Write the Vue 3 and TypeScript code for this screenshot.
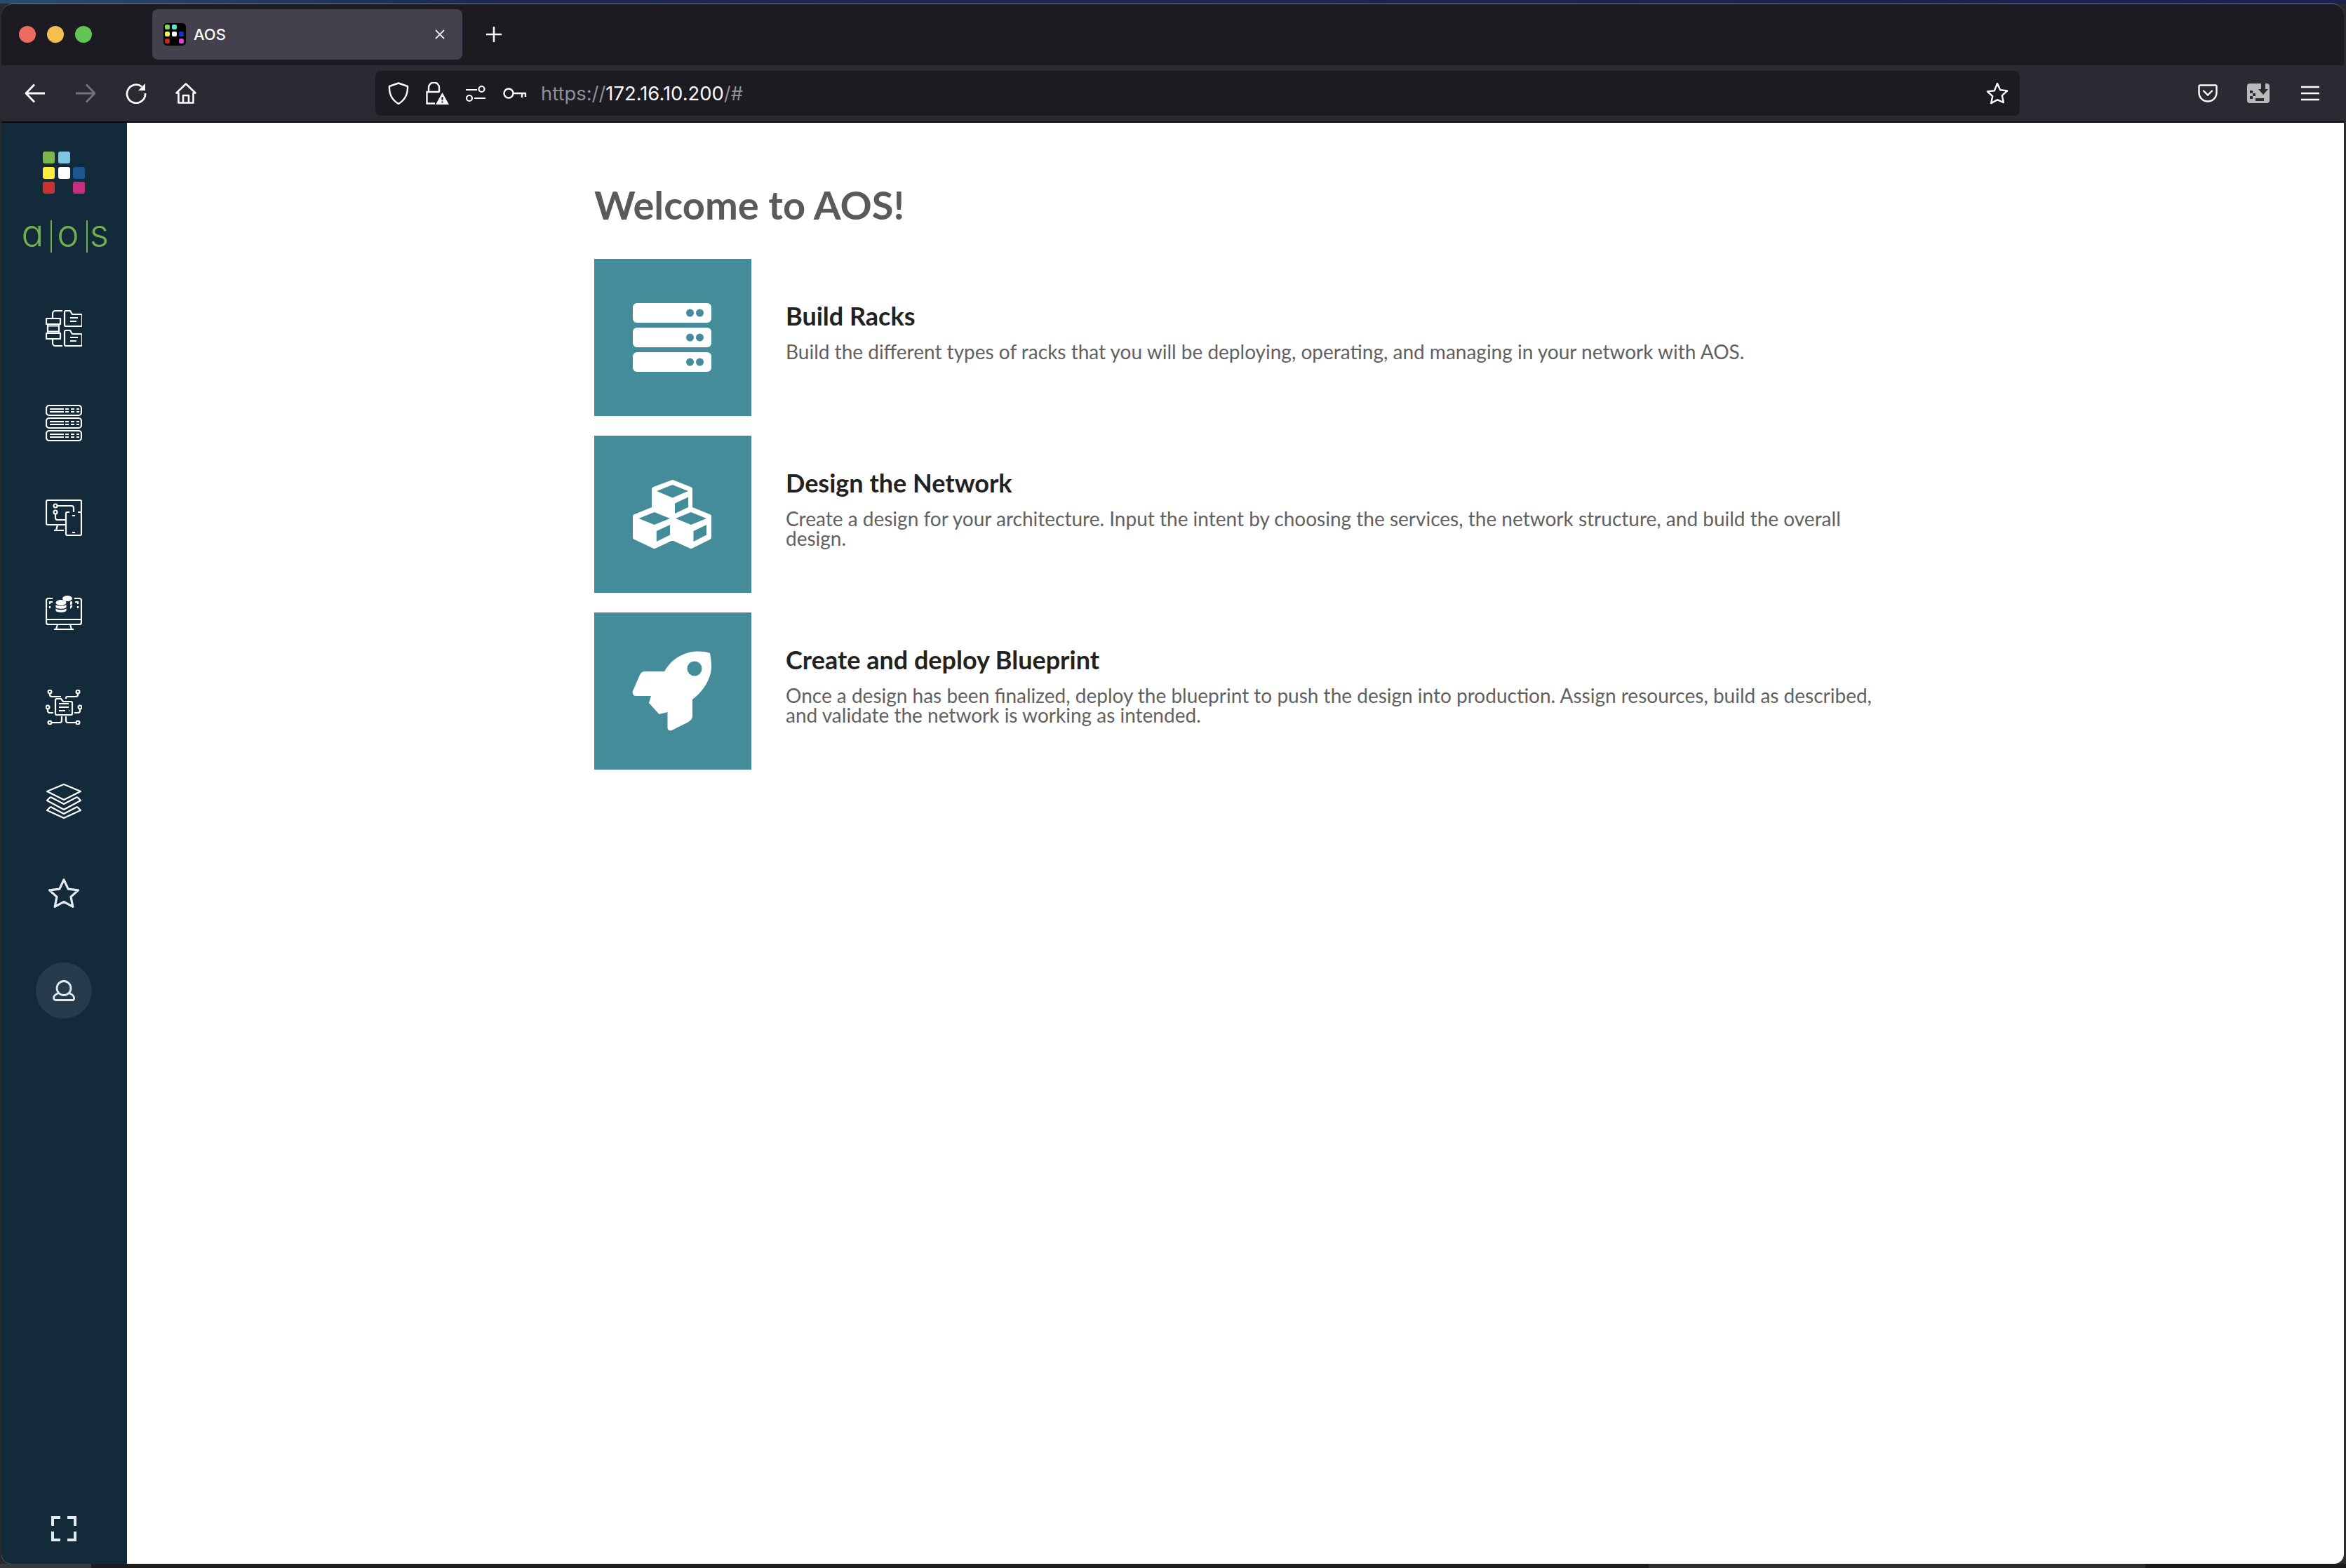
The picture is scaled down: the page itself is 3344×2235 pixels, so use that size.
<script setup lang="ts">
interface Card {
  kind: string
  title: string
  text: string
}

const cards: Card[] = [
  {
    kind: "racks",
    title: "Build Racks",
    text: "Build the different types of racks that you will be deploying, operating, and managing in your network with AOS.",
  },
  {
    kind: "design",
    title: "Design the Network",
    text: "Create a design for your architecture. Input the intent by choosing the services, the network structure, and build the overall design.",
  },
  {
    kind: "deploy",
    title: "Create and deploy Blueprint",
    text: "Once a design has been finalized, deploy the blueprint to push the design into production. Assign resources, build as described, and validate the network is working as intended.",
  },
]

const logoDots = ["green", "sky", "none", "yellow", "white", "blue", "red", "none", "pink"]
const rackRows = [63, 98, 133]
</script>

<template>
  <div class="screen">
    <div class="desktop-top"></div>
    <div class="window">
      <div class="titlebar">
        <div class="lights">
          <span class="light red"></span>
          <span class="light amber"></span>
          <span class="light green"></span>
        </div>
        <div class="tab">
          <span class="favicon">
            <i class="fd c1"></i><i class="fd c2"></i><i class="fd"></i>
            <i class="fd c3"></i><i class="fd c4"></i><i class="fd c5"></i>
            <i class="fd c6"></i><i class="fd"></i><i class="fd c7"></i>
          </span>
          <span class="tab-title">AOS</span>
          <svg class="tab-close" width="14" height="14" viewBox="0 0 14 14">
            <path d="M1 1l12 12M13 1L1 13" stroke="#e8e8ea" stroke-width="1.8" fill="none" />
          </svg>
        </div>
        <svg class="new-tab" width="24" height="24" viewBox="0 0 24 24">
          <path d="M12 1v22M1 12h22" stroke="#fbfbfe" stroke-width="2.6" fill="none" />
        </svg>
      </div>

      <div class="toolbar">
        <svg class="tb-icon back" width="30" height="28" viewBox="0 0 30 28" fill="none" stroke="#fbfbfe" stroke-width="2.8">
          <path d="M29 14H3M14 1.5L2 14l12 12.5" stroke-linejoin="round" />
        </svg>
        <svg class="tb-icon forward" width="30" height="28" viewBox="0 0 30 28" fill="none" stroke="#74737a" stroke-width="2.8">
          <path d="M1 14h26M16 1.5L28 14 16 26.5" stroke-linejoin="round" />
        </svg>
        <svg class="tb-icon reload" width="30" height="30" viewBox="0 0 30 30" fill="none" stroke="#fbfbfe" stroke-width="2.8">
          <path d="M23 5.5A13 13 0 1 0 28 15" />
          <path d="M28 1v10H18z" fill="#fbfbfe" stroke="none" />
        </svg>
        <svg class="tb-icon home" width="30" height="30" viewBox="0 0 30 30" fill="none" stroke="#fbfbfe" stroke-width="2.6" stroke-linejoin="round">
          <path d="M1.5 14.5L15 1.5l13.5 13H25.5v14h-21v-14z" />
          <path d="M11 28.5V18h8v10.5" />
        </svg>

        <div class="urlbar">
          <svg class="ub-icon shield" width="30" height="32" viewBox="0 0 30 32" fill="none" stroke="#fbfbfe" stroke-width="2.4" stroke-linejoin="round">
            <path d="M15 1.5L28 6c.5 11-3 19-13 25C5 25 1.5 17 2 6z" />
          </svg>
          <svg class="ub-icon lock" width="34" height="32" viewBox="0 0 34 32" fill="none">
            <path d="M5 14V8a7.5 7.5 0 0 1 15 0v6M14 30.5H2.5V14h18" stroke="#fbfbfe" stroke-width="2.4" />
            <path d="M24.5 15L34 32H15z" fill="#fbfbfe" />
            <path d="M24.5 21v5M24.5 27.5v2" stroke="#2b2a33" stroke-width="2.2" />
          </svg>
          <svg class="ub-icon perms" width="30" height="30" viewBox="0 0 30 30" fill="none" stroke="#fbfbfe" stroke-width="2.2">
            <path d="M1 10h16M13 22h16" />
            <circle cx="23.5" cy="9" r="4" />
            <circle cx="6" cy="22" r="4" />
          </svg>
          <svg class="ub-icon key" width="34" height="20" viewBox="0 0 34 20" fill="none" stroke="#fbfbfe" stroke-width="2.4">
            <circle cx="8" cy="10" r="6.5" />
            <path d="M14.5 10H33M27 10v6M32 10v5" />
          </svg>
          <span class="url"><span class="dim">https://</span>172.16.10.200<span class="dim">/#</span></span>
          <svg class="ub-star" width="32" height="32" viewBox="0 0 32 32" fill="none" stroke="#fbfbfe" stroke-width="2.4" stroke-linejoin="round">
            <path d="M16 2l4.200 9.200 10 1.200-7.400 6.800 2 9.900L16 25.200l-8.800 4.900 2-9.900-7.400-6.800 10-1.200z" />
          </svg>
        </div>

        <svg class="tb-icon pocket" width="28" height="26" viewBox="0 0 28 26" fill="none" stroke="#fbfbfe" stroke-width="2.4">
          <path d="M3 1.5h22A1.500 1.500 0 0 1 26.500 3v9c0 7-5.500 12.500-12.500 12.500S1.500 19 1.500 12V3A1.500 1.500 0 0 1 3 1.500z" />
          <path d="M8 9.5l6 6 6-6" stroke-linecap="round" />
        </svg>
        <svg class="tb-icon ext" width="32" height="28" viewBox="0 0 32 28">
          <rect width="32" height="28" rx="4" fill="#b9b9b9" />
          <path d="M20 0h6v8h4l-7 8-7-8h4z" fill="#2b2a33" />
          <path d="M4 10h4v4H4zM8 14h4v4H8zM4 18h4v4H4zM12 21h12v4H12z" fill="#2b2a33" />
        </svg>
        <svg class="tb-icon menu" width="26" height="22" viewBox="0 0 26 22">
          <path d="M0 2h26M0 11h26M0 20h26" stroke="#fbfbfe" stroke-width="2.6" />
        </svg>
      </div>

      <div class="page">
        <aside class="sidebar">
          <div class="logo-dots">
            <span v-for="(c, i) in logoDots" :key="i" class="ld" :class="c"></span>
          </div>
          <div class="wordmark">
            <span class="wm a">a</span><span class="wm-sep first"></span>
            <span class="wm o">o</span><span class="wm-sep"></span>
            <span class="wm s">s</span>
          </div>

          <nav class="nav">
            <div class="nav-item">
              <svg width="52" height="52" viewBox="0 0 52 52" fill="none" stroke="#fff" stroke-width="2.2" stroke-linejoin="round">
                <path d="M1 12h20v8H1zM3 20v13M19 20v13M3 22.5h16M3 30.5h16M1 33h20v8H1z" />
                <path d="M10 11V5a4 4 0 0 1 4-4h10M10 42v5a4 4 0 0 0 4 4h10" />
                <path d="M27 3a2 2 0 0 1 2-2h6l3 5h12a2 2 0 0 1 2 2v13a2 2 0 0 1-2 2H29a2 2 0 0 1-2-2z" />
                <path d="M35 11h11M35 16h9" />
                <path d="M27 31a2 2 0 0 1 2-2h6l3 5h12a2 2 0 0 1 2 2v13a2 2 0 0 1-2 2H29a2 2 0 0 1-2-2z" />
                <path d="M35 39h11M35 44h9" />
              </svg>
            </div>
            <div class="nav-item">
              <svg width="52" height="52" viewBox="0 0 52 52" fill="none" stroke="#fff" stroke-width="2.2">
                <rect x="1" y="1" width="50" height="14" rx="4" />
                <rect x="1" y="19" width="50" height="14" rx="4" />
                <rect x="1" y="37" width="50" height="14" rx="4" />
                <path d="M6 6h20M6 10h20M28 6h5M36 6h5M44 6h4M28 10h5M36 10h5M44 10h4" />
                <path d="M6 24h20M6 28h20M28 24h5M36 24h5M44 24h4M28 28h5M36 28h5M44 28h4" />
                <path d="M6 42h20M6 46h20M28 42h5M36 42h5M44 42h4M28 46h5M36 46h5M44 46h4" />
              </svg>
            </div>
            <div class="nav-item">
              <svg width="52" height="52" viewBox="0 0 52 52" fill="none" stroke="#fff" stroke-width="2.2" stroke-linejoin="round">
                <path d="M28 36H3a2 2 0 0 1-2-2V3a2 2 0 0 1 2-2h46a2 2 0 0 1 2 2v15" />
                <path d="M17 36l-2 8M12 44h14" />
                <path d="M34 18h-3a2 2 0 0 0-2 2v29a2 2 0 0 0 2 2h18a2 2 0 0 0 2-2V20a2 2 0 0 0-2-2h-3" />
                <path d="M38 23h4M38 47h4" />
                <circle cx="14" cy="9" r="2.5" />
                <circle cx="14" cy="18" r="2.5" />
                <path d="M17 9h20a3 3 0 0 1 3 3v6M14 21v5a3 3 0 0 0 3 3h11" />
              </svg>
            </div>
            <div class="nav-item">
              <svg width="52" height="50" viewBox="0 0 52 50" fill="none" stroke="#fff" stroke-width="2.2" stroke-linejoin="round">
                <path d="M10 5H4a3 3 0 0 0-3 3v31a3 3 0 0 0 3 3h44a3 3 0 0 0 3-3V8a3 3 0 0 0-3-3h-7" />
                <path d="M1 35h50M17 42l-2 7M35 42l2 7M12 49h28" />
                <path d="M10 10H6v3M6 16v3M42 10h4v3M46 16v3" />
                <g fill="#fff" stroke="none">
                  <ellipse cx="31" cy="5" rx="7" ry="4" />
                  <path d="M35 9.5l3-.5v4l-3 2zM35 16l3-2v3l-3 3z" />
                  <ellipse cx="22" cy="11" rx="7.5" ry="4" />
                  <path d="M14.5 13.5c1 3 14 3 15 0v4c-1 3-14 3-15 0zM14.5 19c1 3 14 3 15 0v3.5c-1 3-14 3-15 0z" />
                </g>
              </svg>
            </div>
            <div class="nav-item">
              <svg width="52" height="50" viewBox="0 0 52 50" fill="none" stroke="#fff" stroke-width="2.2" stroke-linejoin="round">
                <path d="M14 15a2 2 0 0 1 2-2h6l3 4h11a2 2 0 0 1 2 2v15a2 2 0 0 1-2 2H16a2 2 0 0 1-2-2z" />
                <path d="M19 20h14M19 25h14M19 30h9M33 30h1" />
                <circle cx="6" cy="3" r="2.4" />
                <circle cx="46" cy="3" r="2.4" />
                <circle cx="3" cy="25" r="2.4" />
                <circle cx="49" cy="25" r="2.4" />
                <circle cx="6" cy="47" r="2.4" />
                <circle cx="46" cy="47" r="2.4" />
                <path d="M6 5.500V7a3 3 0 0 0 3 3h13M46 5.500V7a3 3 0 0 1-3 3H31a2 2 0 0 0-2 2v1" />
                <path d="M3 27.500V30a3 3 0 0 0 3 3h5M49 27.500V30a3 3 0 0 1-3 3h-5" />
                <path d="M8.500 47H20a3 3 0 0 0 3-3v-6M43.500 47H32a3 3 0 0 1-3-3v-6" />
              </svg>
            </div>
            <div class="nav-item">
              <svg width="50" height="50" viewBox="0 0 50 50" fill="none" stroke="#fff" stroke-width="2.2" stroke-linejoin="round">
                <path d="M25 1L49 11 25 23 1 11z" />
                <path d="M6 19l-5 5 24 13 24-13-5-5M6 19l19 10 19-10" />
                <path d="M6 33l-5 5 24 11 24-11-5-5M6 33l19 10 19-10" />
              </svg>
            </div>
            <div class="nav-item">
              <svg class="nav-star" width="46" height="42" viewBox="0 0 46 42" fill="none" stroke="#e4e9ee" stroke-width="3.2" stroke-linejoin="round">
                <path d="M23 2l6.200 13.100 14.300 1.700-10.500 9.600 2.800 14-12.800-7-12.800 7 2.800-14L2.500 16.800l14.300-1.700z" />
              </svg>
            </div>
            <div class="nav-item">
              <span class="avatar">
                <svg width="32" height="30" viewBox="0 0 32 30" fill="none" stroke="#e4e9ee" stroke-width="2.8" stroke-linejoin="round">
                  <circle cx="16" cy="11.5" r="10" />
                  <path d="M9 18.500C4.500 20 1.500 22.500 1.500 25.500a3 3 0 0 0 3 3h25a3 3 0 0 0 1-3c0-3-3-5.500-7.500-7" />
                </svg>
              </span>
            </div>
          </nav>

          <svg class="fullscreen" width="36" height="36" viewBox="0 0 36 36" fill="none" stroke="#e4e9ee" stroke-width="4">
            <path d="M13 2H2v12M23 2h11v12M13 34H2V22M23 34h11V22" />
          </svg>
        </aside>

        <main class="content">
          <h1 class="welcome">Welcome to AOS!</h1>
          <div class="cards">
            <section v-for="card in cards" :key="card.kind" class="card">
              <div class="tile">
                <svg width="224" height="224" viewBox="0 0 224 224">
                  <g v-if="card.kind === 'racks'">
                    <g v-for="y in rackRows" :key="y">
                      <rect x="55" :y="y" width="112" height="28" rx="6" fill="#fff" />
                      <circle cx="136.5" :cy="y + 14" r="5.5" fill="#458c9b" />
                      <circle cx="150.5" :cy="y + 14" r="5.5" fill="#458c9b" />
                    </g>
                  </g>
                  <g v-else-if="card.kind === 'design'">
                    <path d="M111.6 66L137 76v28l27 11v30l-26 13-26.400-12-25.900 12L58 145v-30l27-11V76z" fill="#fff" stroke="#fff" stroke-width="6" stroke-linejoin="round" />
                    <path d="M111.6 70L134 79l-22.400 9.500L89 79zM134 87.500V102l-19 9V96.500zM85.700 109l22.300 9-22.300 9-22.300-9zM108 127v14.500L88.800 151v-15zM138 109l22 9-22 9-22-9zM160 127v14.500L141.500 151v-15z" fill="#458c9b" />
                  </g>
                  <g v-else>
                    <path d="M165 58c-9-3-20-3-30-1-15 4-27 13-35 27H72c-3 0-6 2-7 5l-10 23c-1 4 1 7 5 7h21l-3 10 14.500 16 12-3v22c0 4 3 5 6 4l22-11c5-3 7-5 7.500-8v-25c16-12 27-30 27-47 0-7-1-13-2-19z" fill="#fff" />
                    <circle cx="143" cy="80" r="10.5" fill="#458c9b" />
                  </g>
                </svg>
              </div>
              <div class="card-body">
                <h2>{{ card.title }}</h2>
                <p>{{ card.text }}</p>
              </div>
            </section>
          </div>
        </main>
      </div>
    </div>
    <div class="desktop-bottom">
      <span class="dock-left"></span>
      <span class="dock-dark"></span>
      <span class="dock-mid"></span>
      <span class="dock-end"></span>
    </div>
  </div>
</template>

<style>
html,
body {
  margin: 0;
  background: #1d1c1e;
}
</style>

<style scoped>
.screen {
  width: 3344px;
  height: 2235px;
  display: flex;
  flex-direction: column;
  overflow: hidden;
  background: #2a2a2c;
  font-family: "Lato", "Open Sans", sans-serif;
}

.desktop-top {
  height: 5px;
  flex: none;
  background: linear-gradient(90deg, #2b4a6e 0, #1d2a4f 20%, #1b2050 100%);
}

.window {
  flex: 1;
  min-height: 0;
  margin: 0 3px 0 2px;
  display: flex;
  flex-direction: column;
  border-radius: 16px 16px 14px 14px;
  overflow: hidden;
}

.titlebar {
  height: 88px;
  flex: none;
  box-sizing: border-box;
  border-top: 1px solid #77767c;
  border-radius: 16px 16px 0 0;
  background: #1c1b22;
  display: flex;
  align-items: flex-start;
  padding-top: 7px;
}

.lights {
  display: flex;
  gap: 16px;
  margin: 24px 0 0 25px;
}

.light {
  width: 24px;
  height: 24px;
  border-radius: 50%;
}

.light.red {
  background: #ed6a5e;
}

.light.amber {
  background: #f5bf4f;
}

.light.green {
  background: #61c454;
}

.tab {
  width: 442px;
  height: 72px;
  margin-left: 86px;
  box-sizing: border-box;
  border-radius: 8px;
  background: #42414d;
  display: flex;
  align-items: center;
  padding: 0 25px 0 16px;
}

.favicon {
  width: 32px;
  height: 32px;
  border-radius: 5px;
  background: #000;
  display: grid;
  grid-template-columns: repeat(3, 7px);
  grid-auto-rows: 7px;
  gap: 3px;
  padding: 2px 0 0 2px;
  box-sizing: border-box;
}

.fd {
  display: block;
  border-radius: 2px;
}

.c1 { background: #6fe04a; }
.c2 { background: #4fe6e6; }
.c3 { background: #f7f73d; }
.c4 { background: #fff; }
.c5 { background: #1030e8; }
.c6 { background: #e81818; }
.c7 { background: #e040e0; }

.tab-title {
  margin-left: 11px;
  flex: 1;
  color: #fbfbfe;
  font: 500 22px "Inter", sans-serif;
}

.new-tab {
  margin: 24px 0 0 33px;
}

.toolbar {
  height: 80px;
  flex: none;
  background: #2b2a33;
  border-bottom: 2px solid #0c0c0d;
  display: flex;
  align-items: center;
  box-sizing: content-box;
}

.tb-icon {
  flex: none;
}

.back {
  margin-left: 33px;
}

.forward {
  margin-left: 42px;
}

.reload {
  margin-left: 42px;
}

.home {
  margin-left: 41px;
}

.urlbar {
  width: 2344px;
  height: 64px;
  margin-left: 255px;
  border-radius: 8px;
  background: #1c1b22;
  display: flex;
  align-items: center;
  flex: none;
}

.ub-icon {
  flex: none;
}

.shield {
  margin-left: 18px;
}

.lock {
  margin-left: 23px;
}

.perms {
  margin-left: 23px;
}

.key {
  margin-left: 24px;
}

.url {
  margin-left: 20px;
  flex: 1;
  color: #fbfbfe;
  font: 400 27.4px "Inter", sans-serif;
  white-space: nowrap;
}

.dim {
  color: #8f8f94;
}

.ub-star {
  margin-right: 16px;
}

.pocket {
  margin-left: 254px;
}

.ext {
  margin-left: 42px;
}

.menu {
  margin-left: 45px;
}

.page {
  flex: 1;
  min-height: 0;
  display: flex;
  background: #fff;
}

.sidebar {
  width: 179px;
  flex: none;
  background: #132a3a;
  display: flex;
  flex-direction: column;
  align-items: center;
  padding: 41px 1px 32px 0;
  box-sizing: border-box;
}

.logo-dots {
  display: grid;
  grid-template-columns: repeat(3, 17px);
  grid-auto-rows: 17px;
  gap: 4.5px;
}

.ld {
  border-radius: 3px;
}

.ld.green { background: #7ab648; }
.ld.sky { background: #7fc4e4; }
.ld.yellow { background: #fdec3e; }
.ld.white { background: #fff; }
.ld.blue { background: #1c5591; }
.ld.red { background: #c9322e; }
.ld.pink { background: #c92d7f; }

.wordmark {
  margin-top: 38px;
  height: 46px;
  display: flex;
  align-items: center;
  color: #71b04f;
  font-family: "Inter", sans-serif;
  font-weight: 300;
  font-size: 53px;
  line-height: 46px;
  font-feature-settings: "cv11";
}

.wm-sep {
  width: 2px;
  height: 46px;
  flex: none;
  background: #71b04f;
  margin: 0 8px 0 10px;
}

.wm {
  position: relative;
  top: -5px;
  display: flex;
  justify-content: center;
}

.wm.a {
  width: 30px;
}

.wm.o {
  width: 31px;
}

.wm.s {
  width: 18px;
}

.nav {
  margin-top: 41px;
  width: 100%;
  display: flex;
  flex-direction: column;
}

.nav-item {
  height: 134.8px;
  display: flex;
  align-items: center;
  justify-content: center;
}

.nav-star {
  margin-bottom: 8px;
}

.avatar {
  width: 80px;
  height: 80px;
  border-radius: 50%;
  background: #263c4c;
  display: flex;
  align-items: center;
  justify-content: center;
}

.fullscreen {
  margin-top: auto;
}

.content {
  flex: 1;
  min-width: 0;
  padding: 87px 0 0 666px;
}

.welcome {
  margin: 0 0 47px;
  font-size: 56px;
  line-height: 60px;
  font-weight: 700;
  color: #5a5a5a;
}

.cards {
  display: flex;
  flex-direction: column;
  gap: 28px;
}

.card {
  display: flex;
  align-items: center;
  gap: 49px;
}

.tile {
  width: 224px;
  height: 224px;
  flex: none;
  background: #458c9b;
}

.tile svg {
  display: block;
}

.card-body {
  width: 1575px;
  padding-bottom: 19px;
}

.card-body h2 {
  margin: 0 0 15px;
  font-size: 36px;
  line-height: 44px;
  font-weight: 700;
  color: #222;
}

.card-body p {
  margin: 0;
  font-size: 28px;
  line-height: 28px;
  color: #616161;
}

.desktop-bottom {
  height: 6px;
  flex: none;
  display: flex;
}

.dock-left {
  width: 130px;
  background: #3a3a3a;
}

.dock-dark {
  width: 2220px;
  background: #1f1c1c;
}

.dock-mid {
  width: 708px;
  background: #2f2f2f;
}

.dock-end {
  flex: 1;
  background: #1b1a1c;
}
</style>
